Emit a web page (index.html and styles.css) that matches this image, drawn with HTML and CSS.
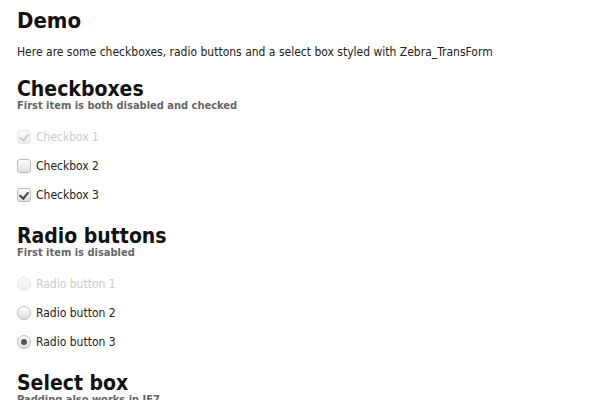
FILE: index.html
```html
<!DOCTYPE html>
<html>
<head>
  <title>Zebra_TransForm Demo</title>
  <link rel="stylesheet" href="styles.css">
</head>
<body>
<div class="page">
  <h1>Demo</h1>
  <p class="intro">Here are some checkboxes, radio buttons and a select box styled with Zebra_TransForm</p>

  <h2>Checkboxes</h2>
  <div class="note">First item is both disabled and checked</div>
  <div class="options">
    <label class="row disabled"><span class="box checked"></span>Checkbox 1</label>
    <label class="row"><span class="box"></span>Checkbox 2</label>
    <label class="row"><span class="box checked"></span>Checkbox 3</label>
  </div>

  <h2>Radio buttons</h2>
  <div class="note">First item is disabled</div>
  <div class="options">
    <label class="row disabled"><span class="dot"></span>Radio button 1</label>
    <label class="row"><span class="dot"></span>Radio button 2</label>
    <label class="row"><span class="dot checked"></span>Radio button 3</label>
  </div>

  <h2>Select box</h2>
  <div class="note">Padding also works in IE7</div>
</div>
</body>
</html>
```

FILE: styles.css
```css
body {
    margin: 0;
    background-color: #fff;
    color: #222;
    font-family: "DejaVu Sans Condensed", "DejaVu Sans", sans-serif;
    font-size: 12px;
}

.page {
    padding: 8px 17px 0;
}

h1 {
    margin: 0;
    font-size: 22px;
    line-height: 26px;
    color: #111;
}

.intro {
    margin: 10px 0 0;
    line-height: 16px;
}

h2 {
    margin: 18px 0 0;
    font-size: 21px;
    line-height: 22px;
    color: #111;
}

.options + h2 {
    margin-top: 16px;
}

.note {
    font-size: 11px;
    font-weight: bold;
    line-height: 12px;
    color: #666;
}

.options {
    padding-top: 10px;
}

.row {
    display: flex;
    align-items: center;
    height: 29px;
}

.row.disabled {
    color: #ccc;
}

.box, .dot {
    position: relative;
    box-sizing: border-box;
    width: 14px;
    height: 14px;
    margin-right: 5px;
    border: 1px solid #bdbdbd;
    background: linear-gradient(#fdfdfd, #dedede);
}

.box {
    border-radius: 3px;
}

.dot {
    border-radius: 50%;
}

.box.checked::after {
    content: '';
    position: absolute;
    left: 3px;
    top: 1px;
    width: 4px;
    height: 7px;
    border: solid #444;
    border-width: 0 2px 2px 0;
    transform: rotate(40deg);
}

.dot.checked::after {
    content: '';
    position: absolute;
    left: 3px;
    top: 3px;
    width: 6px;
    height: 6px;
    border-radius: 50%;
    background-color: #555;
}

.disabled .box, .disabled .dot {
    border-color: #e6e6e6;
    background: linear-gradient(#fafafa, #eeeeee);
}

.disabled .box.checked::after {
    border-color: #ccc;
}
```
